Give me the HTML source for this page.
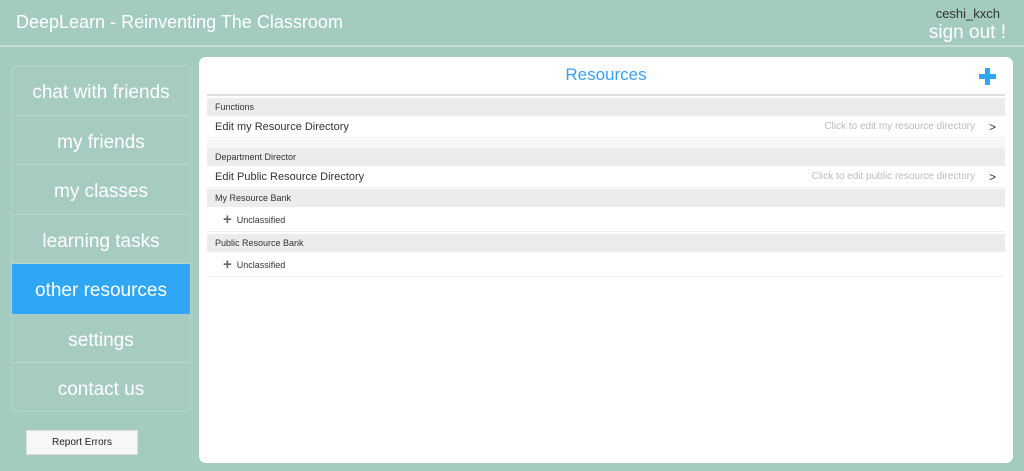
<!DOCTYPE html>
<html><head><meta charset="utf-8"><style>
*{margin:0;padding:0;box-sizing:border-box}
body{width:1024px;height:471px;background:#a4cbc0;font-family:"Liberation Sans",sans-serif;position:relative;overflow:hidden}
.hdr{position:absolute;left:0;top:0;width:1024px;height:47px;border-bottom:2px solid #c4ddd6}
.title{position:absolute;left:16px;top:12px;color:#fff;font-size:18px}
.user{position:absolute;right:24px;top:6px;color:#333;font-size:13px}
.out{position:absolute;right:18px;top:22px;color:#fff;font-size:19px}
.side{position:absolute;left:11px;top:65px;width:180px;height:347px;border:1px solid #b5d5cc;border-radius:6px;background:#a6cbc1}
.side div{height:49.5px;border-bottom:1px solid #b7d6cd;color:#fff;font-size:19px;text-align:center;line-height:54px}
.side div.act{background:#2fa6f6;border-color:#2fa6f6}
.rep{position:absolute;left:26px;top:430px;width:112px;height:25px;background:#f7f7f9;border:1px solid #ddd;font-size:10px;color:#222;text-align:center;line-height:24px}
.main{position:absolute;left:199px;top:57px;width:814px;height:406px;background:#fff;border-radius:7px}
.rt{position:absolute;left:0;width:100%;top:8px;text-align:center;color:#3aa0f0;font-size:17px}
.plus{position:absolute;left:780px;top:11px;width:17px;height:17px}
.plus:before,.plus:after{content:"";position:absolute;background:#2fa6f6}
.plus:before{left:6px;top:0;width:5px;height:17px}.plus:after{left:0;top:6px;width:17px;height:5px}
.line{position:absolute;left:8px;top:37px;width:798px;height:2px;background:#ddd}
.r{position:absolute;left:8px;width:798px;padding-left:8px;color:#333}
.h{background:#ececec;font-size:9px;height:18px;line-height:18px}
.e{font-size:11px;height:22px;line-height:22px;border-bottom:1px solid #f0f0f0}
.e .hint{position:absolute;right:30px;top:0;color:#bbb;font-size:10px}
.e .gt{position:absolute;right:9px;top:0;font-size:12px}
.u{font-size:9px;height:24px;line-height:24px;padding-left:16px;border-bottom:1px solid #f0f0f0}
.u b{display:inline-block;color:#666;font-size:15px;margin-right:5px;vertical-align:-1px}
</style></head><body>
<div class="hdr"><div class="title">DeepLearn - Reinventing The Classroom</div><div class="user">ceshi_kxch</div><div class="out">sign out !</div></div>
<div class="side"><div>chat with friends</div><div>my friends</div><div>my classes</div><div>learning tasks</div><div class="act">other resources</div><div>settings</div><div style="border:none">contact us</div></div>
<div class="rep">Report Errors</div>
<div class="main">
<div class="rt">Resources</div><div class="plus"></div><div class="line"></div>
<div class="r h" style="top:41px">Functions</div>
<div class="r e" style="top:59px">Edit my Resource Directory<span class="hint">Click to edit my resource directory</span><span class="gt">&gt;</span></div>
<div class="r" style="top:82px;height:9px;background:#f7f7f7"></div>
<div class="r h" style="top:91px">Department Director</div>
<div class="r e" style="top:109px">Edit Public Resource Directory<span class="hint">Click to edit public resource directory</span><span class="gt">&gt;</span></div>
<div class="r h" style="top:132px">My Resource Bank</div>
<div class="r u" style="top:151px"><b>+</b>Unclassified</div>
<div class="r h" style="top:177px">Public Resource Bank</div>
<div class="r u" style="top:196px"><b>+</b>Unclassified</div>
</div>
</body></html>
